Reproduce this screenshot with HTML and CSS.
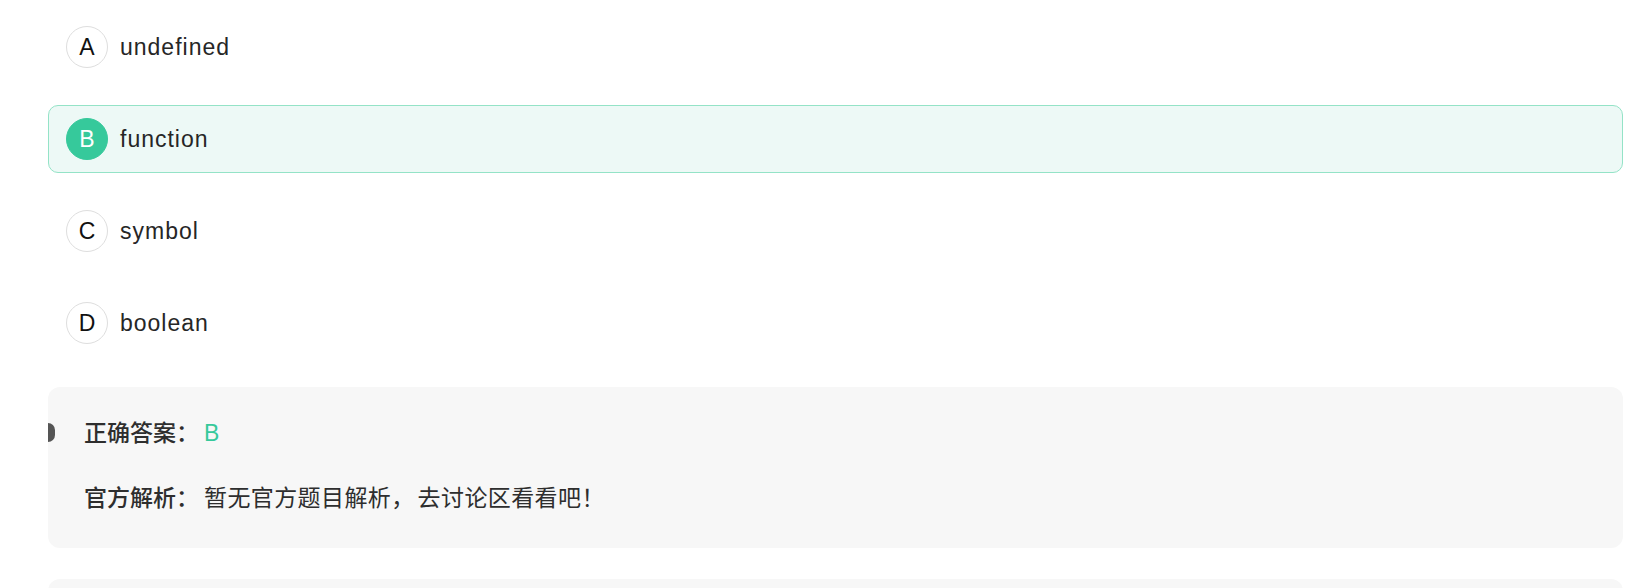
FILE: index.html
```html
<!DOCTYPE html>
<html lang="zh-CN">
<head>
<meta charset="utf-8">
<title>题目</title>
<link rel="stylesheet" href="styles.css">
</head>
<body>
<div class="page">
  <ul class="options">
    <li class="option"><span class="letter">A</span><span class="text">undefined</span></li>
    <li class="option is-right"><span class="letter">B</span><span class="text">function</span></li>
    <li class="option"><span class="letter">C</span><span class="text">symbol</span></li>
    <li class="option"><span class="letter">D</span><span class="text">boolean</span></li>
  </ul>
  <div class="analysis">
    <span class="marker"></span>
    <p class="line"><span class="label">正确答案<span class="colon">：</span></span><span class="answer">B</span></p>
    <p class="line"><span class="label">官方解析<span class="colon">：</span></span><span class="body">暂无官方题目解析<span class="comma">，</span>去讨论区看看吧！</span></p>
  </div>
  <div class="analysis next"></div>
</div>
</body>
</html>
```

FILE: styles.css
```css
* { box-sizing: border-box; }
html, body { margin: 0; padding: 0; background: #ffffff; }
body {
  font-family: "Liberation Sans", "Noto Sans CJK SC", sans-serif;
  color: #333333;
  overflow: hidden;
}
.page {
  padding: 13px 14px 0 48px;
}
.options {
  list-style: none;
  margin: 0;
  padding: 0;
  display: flex;
  flex-direction: column;
  gap: 24px;
}
.option {
  display: flex;
  align-items: center;
  height: 68px;
  padding: 0 17px;
  border: 1px solid transparent;
  border-radius: 10px;
}
.option.is-right {
  background: #edf9f6;
  border-color: #94e3c7;
}
.letter {
  flex: 0 0 42px;
  width: 42px;
  height: 42px;
  border-radius: 50%;
  border: 1px solid #dedede;
  display: flex;
  align-items: center;
  justify-content: center;
  font-size: 23px;
  color: #111111;
  background: #ffffff;
}
.is-right .letter {
  background: #36c99b;
  border-color: #36c99b;
  color: #ffffff;
}
.text {
  margin-left: 12px;
  font-size: 23px;
  letter-spacing: 1px;
  color: #262626;
}
.analysis {
  position: relative;
  margin-top: 30px;
  background: #f7f7f7;
  border-radius: 12px;
  padding: 24px 36px 28px;
  display: flex;
  flex-direction: column;
  gap: 21px;
}
.marker {
  position: absolute;
  left: 0;
  top: 36px;
  width: 7px;
  height: 19px;
  background: #555555;
  border-radius: 0 9px 9px 0;
}
.line {
  margin: 0;
  line-height: 44px;
  font-size: 23px;
  color: #2e2e2e;
}
.label {
  font-weight: 500;
}
.body {
  letter-spacing: 0.4px;
}
.colon {
  margin-right: 5px;
}
.comma {
  margin-right: 3px;
}
.answer {
  color: #36c99b;
}
.analysis.next {
  margin-top: 31px;
  height: 60px;
  padding: 0;
}
```
